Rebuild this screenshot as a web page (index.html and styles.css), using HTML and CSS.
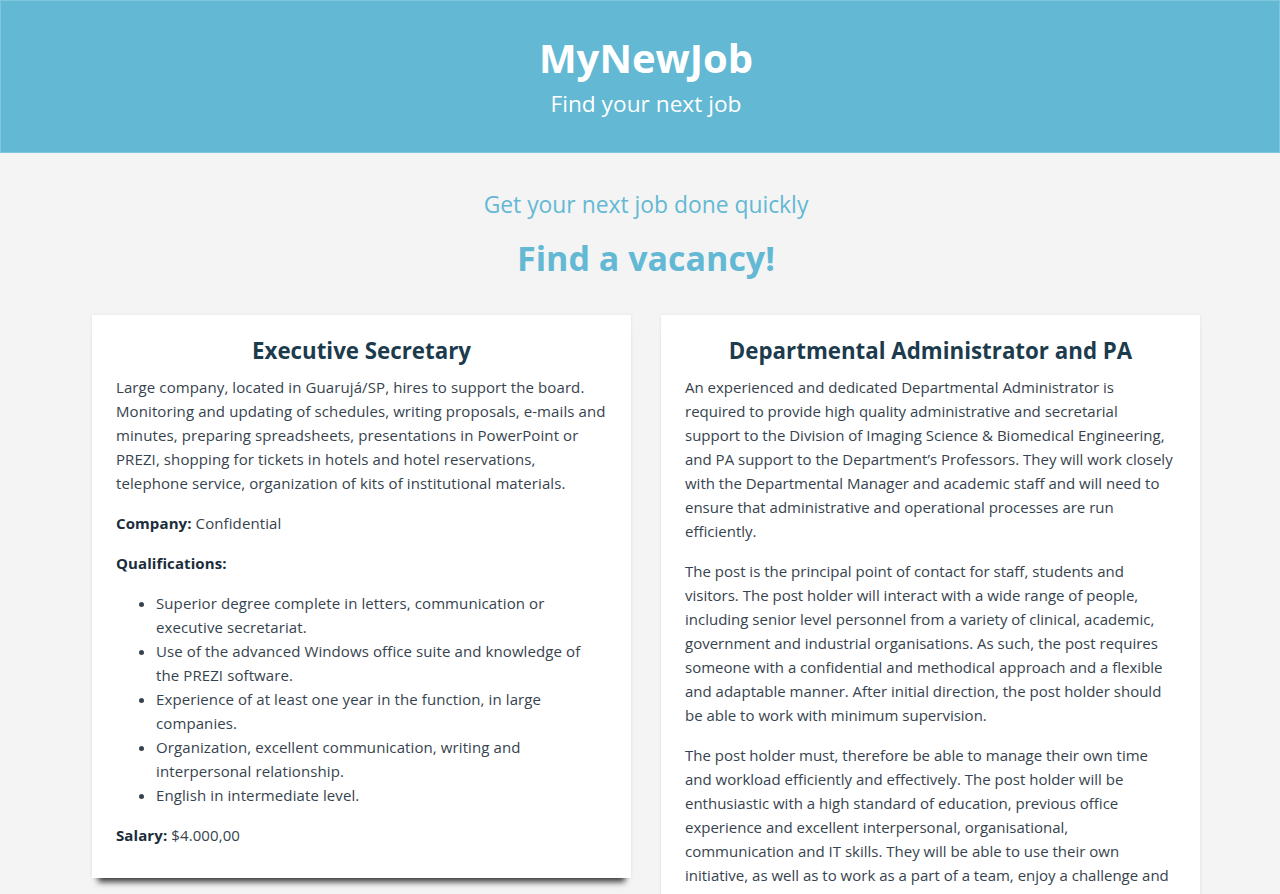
FILE: index.html
```html
<!DOCTYPE html>
<html lang="en">
<head>
<meta charset="utf-8">
<title>MyNewJob</title>
<link rel="stylesheet" href="styles.css">
</head>
<body>
<header class="site-header">
  <h1 class="brand">MyNewJob</h1>
  <p class="brand-sub">Find your next job</p>
</header>
<main class="main">
  <section class="intro">
    <p class="tagline">Get your next job done quickly</p>
    <h2 class="headline">Find a vacancy!</h2>
  </section>
  <div class="jobs">
    <article class="card card-secretary">
      <h3 class="card-title">Executive Secretary</h3>
      <p>Large company, located in Guarujá/SP, hires to support the board. Monitoring and updating of schedules, writing proposals, e-mails and minutes, preparing spreadsheets, presentations in PowerPoint or PREZI, shopping for tickets in hotels and hotel reservations, telephone service, organization of kits of institutional materials.</p>
      <p><strong>Company:</strong> Confidential</p>
      <p><strong>Qualifications:</strong></p>
      <ul>
        <li>Superior degree complete in letters, communication or executive secretariat.</li>
        <li>Use of the advanced Windows office suite and knowledge of the PREZI software.</li>
        <li>Experience of at least one year in the function, in large companies.</li>
        <li>Organization, excellent communication, writing and interpersonal relationship.</li>
        <li>English in intermediate level.</li>
      </ul>
      <p><strong>Salary:</strong> $4.000,00</p>
    </article>
    <article class="card">
      <h3 class="card-title">Departmental Administrator and PA</h3>
      <p>An experienced and dedicated Departmental Administrator is required to provide high quality administrative and secretarial support to the Division of Imaging Science &amp; Biomedical Engineering, and PA support to the Department’s Professors. They will work closely with the Departmental Manager and academic staff and will need to ensure that administrative and operational processes are run efficiently.</p>
      <p>The post is the principal point of contact for staff, students and visitors. The post holder will interact with a wide range of people, including senior level personnel from a variety of clinical, academic, government and industrial organisations. As such, the post requires someone with a confidential and methodical approach and a flexible and adaptable manner. After initial direction, the post holder should be able to work with minimum supervision.</p>
      <p>The post holder must, therefore be able to manage their own time and workload efficiently and effectively. The post holder will be enthusiastic with a high standard of education, previous office experience and excellent interpersonal, organisational, communication and IT skills. They will be able to use their own initiative, as well as to work as a part of a team, enjoy a challenge and work under pressure, able to deal with a number of tasks.</p>
      <p><strong>Company:</strong> King's College London</p>
      <p><strong>Salary:</strong> £27,000 - £30,000</p>
    </article>
  </div>
</main>
</body>
</html>
```
FILE: styles.css
```css
* { box-sizing: border-box; }
html, body { margin: 0; padding: 0; }
body {
  background: #f4f4f4;
  font-family: "Open Sans", "Noto Sans", sans-serif;
  font-size: 15px;
  line-height: 24px;
  color: #36434e;
}
.site-header {
  background: #63b8d4;
  border: 1px solid #80c6de;
  height: 153px;
  padding: 33px 0 0 12px;
  text-align: center;
  color: #fff;
}
.brand {
  margin: 0;
  font-size: 40px;
  line-height: 48px;
  font-weight: 700;
}
.brand-sub {
  margin: 6px 0 0;
  font-size: 22.7px;
  line-height: 32px;
}
.main {
  padding: 0 0 40px 12px;
}
.intro {
  text-align: center;
  color: #63b8d4;
  padding-top: 36px;
}
.tagline {
  margin: 0;
  font-size: 22.85px;
  line-height: 32px;
}
.headline {
  margin: 15px 0 0;
  font-size: 34px;
  line-height: 44px;
  font-weight: 700;
}
.jobs {
  width: 1108px;
  margin: 35px auto 0;
  display: grid;
  grid-template-columns: 1fr 1fr;
  column-gap: 30px;
  align-items: start;
}
.card {
  background: #fff;
  padding: 21px 24px 15px;
  box-shadow: 0 0 3px rgba(0,0,0,0.08), 0 10px 6px -6px rgba(0,0,0,0.75);
}
.card-secretary p,
.card-secretary li { letter-spacing: 0.1px; }
.card-title {
  margin: 0 0 9px;
  text-align: center;
  font-size: 22.3px;
  line-height: 30px;
  font-weight: 700;
  color: #1c3b4c;
}
.card p { margin: 0 0 16px; }
.card strong { color: #1b2d3a; font-weight: 700; }
.card ul { margin: 0 0 16px; padding: 0 6px 0 40px; }
```
